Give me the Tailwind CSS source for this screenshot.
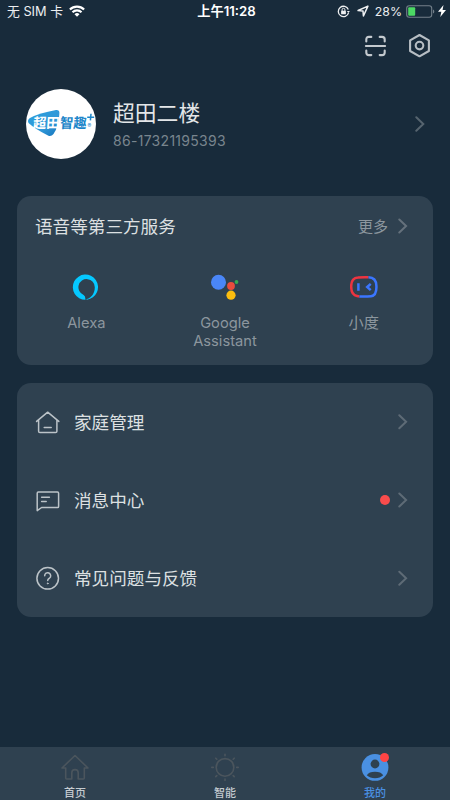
<!DOCTYPE html>
<html lang="zh-CN">
<head>
<meta charset="utf-8">
<title>我的</title>
<script src="https://cdn.jsdelivr.net/npm/@tailwindcss/browser@4"></script>
</head>
<body class="bg-[#182b3b]">
<div class="flex h-[800px] w-[450px] flex-col overflow-hidden bg-[#182b3b] font-['Inter','Noto_Sans_CJK_SC',sans-serif] text-[#dde0e2]">
  <header class="grid h-[23px] shrink-0 grid-cols-[1fr_auto_1fr] items-center pr-1 pl-[7px] text-[12.5px] leading-none text-[#eceef0]">
    <div class="flex items-center gap-[6px]">
      <span class="pt-px text-[12.8px] whitespace-nowrap">无 SIM 卡</span>
      <svg class="h-3 w-4" viewBox="0 0 16 12" fill="none" stroke="#fff" stroke-width="2.2"><path d="M.9 4.5a10.2 10.2 0 0 1 14.2 0M3.5 7.3a6.4 6.4 0 0 1 9 0"/><path d="M5.5 9.3a3.6 3.6 0 0 1 5 0L8 11.7Z" fill="#fff" stroke="none"/></svg>
    </div>
    <span class="pt-px text-[13.2px] font-semibold text-white">上午11:28</span>
    <div class="flex items-center justify-end">
      <svg class="mr-[7px] h-[13px] w-[13px]" viewBox="0 0 13 13" fill="none" stroke="#eef0f2" stroke-width="1.3"><path d="M11.3 4.5a5.2 5.2 0 1 0 .2 3.3"/><path d="M9.8 5.9h3.1l-1.5 2.2Z" fill="#eef0f2" stroke="none"/><rect x="4.1" y="5.7" width="4.8" height="3.6" rx=".5" fill="#eef0f2" stroke="none"/><path d="M5.1 6V4.7a1.4 1.4 0 0 1 2.8 0V6" stroke-width="1"/></svg>
      <svg class="mr-[6px] h-[12px] w-[12px]" viewBox="0 0 11 11" fill="none" stroke="#eef0f2" stroke-width="1.4" stroke-linejoin="round"><path d="M10 1 1 5.1l4.5.4.4 4.6Z"/></svg>
      <span class="mr-[4px] pt-px text-[12.3px]">28%</span>
      <svg class="mr-[3px] h-[13px] w-[29px]" viewBox="0 0 29 13"><rect x=".7" y=".7" width="25" height="11.6" rx="2.5" fill="none" stroke="#74808a" stroke-width="1.1"/><rect x="2.2" y="2.2" width="7" height="8.6" rx="1" fill="#4cd964"/><path d="M27 4.5c1.8.6 1.8 3.4 0 4Z" fill="#74808a"/></svg>
      <svg class="h-3 w-[8px]" viewBox="0 0 7 12" preserveAspectRatio="none" fill="#fff"><path d="M4.8 0 0 6.8h2.9L2 12l5-7H4Z"/></svg>
    </div>
  </header>

  <div class="flex h-[46px] shrink-0 items-center justify-end gap-[20px] pr-[18px]">
    <svg class="h-[23px] w-[23px]" viewBox="0 0 23 23" fill="none" stroke="#c4cacf" stroke-width="2.1" stroke-linecap="round"><path d="M2.3 6.5V4.5Q2.3 1.9 4.9 1.9H7.3M15.7 1.9h2.4q2.6 0 2.6 2.6V6.5M20.7 15.5v2q0 2.6-2.6 2.6h-2.4M7.3 20.1H4.9Q2.3 20.1 2.3 17.5V15.5M1.9 11h19.2"/></svg>
    <svg class="h-6 w-[25px]" viewBox="0 0 25 24" fill="none" stroke="#b7bec4" stroke-width="2.1" stroke-linejoin="round"><path d="M12.5 1 21.9 6.3v10.7l-9.4 5.3-9.4-5.3V6.3Z"/><circle cx="12.5" cy="11.6" r="3.8"/></svg>
  </div>

  <section class="flex h-[110px] shrink-0 items-center pr-[24px] pl-[26px]">
    <div class="h-[70px] w-[70px] shrink-0 overflow-hidden rounded-full bg-white">
      <svg class="h-full w-full" viewBox="0 0 70 70">
        <defs><linearGradient id="brand" x1="0" y1="0" x2="1" y2="1"><stop offset="0" stop-color="#2a9fdc"/><stop offset=".6" stop-color="#3198d8"/><stop offset="1" stop-color="#1373bb"/></linearGradient></defs>
        <path d="M4 29Q13 24 30 21Q33.5 20.6 33.4 24Q33 37 27.5 45Q25 48 22 46.5Q9 40 2.5 34Q1 31 4 29Z" fill="url(#brand)"/>
        <g transform="translate(6.8 38.6) skewX(-4)" font-family="Noto Sans CJK SC, sans-serif" font-size="14" font-weight="700"><text fill="#fff" textLength="26.5" lengthAdjust="spacingAndGlyphs">超田</text><text x="27" fill="#1c86c9" textLength="26.5" lengthAdjust="spacingAndGlyphs">智趣</text></g>
        <path d="M61.2 28.2h7M65 24.8l-.6 6.6" stroke="#1c86c9" stroke-width="1.5"/>
        <text x="61.6" y="38.7" font-size="5.5" fill="#1c86c9" font-family="Inter, sans-serif">®</text>
      </svg>
    </div>
    <div class="ml-[17px] flex-1">
      <div class="pt-px text-[21.8px] leading-[30px] text-[#e3e6e8]">超田二楼</div>
      <div class="mt-[3px] text-[14px] leading-[20px] tracking-[0.29px] text-[#79858e]">86-17321195393</div>
    </div>
    <svg class="h-[17px] w-[12px]" viewBox="0 0 12 17" fill="none" stroke="#56646f" stroke-width="2" stroke-linecap="round"><path d="m2.3 1.3 7 6.7-7 6.7"/></svg>
  </section>

  <section class="mx-[17px] mt-[17px] h-[169px] shrink-0 rounded-[14px] bg-[#2f4150] pt-[15px]">
    <div class="flex h-[30px] items-center justify-between pr-[25px] pl-[18px]">
      <h2 class="pt-[2px] text-[17.6px] leading-none">语音等第三方服务</h2>
      <div class="flex items-center gap-[10px] text-[15px] leading-none text-[#8c969e]">
        <span>更多</span>
        <svg class="h-4 w-[10px]" viewBox="0 0 10 16" fill="none" stroke="#65717c" stroke-width="2" stroke-linecap="round"><path d="m1.3 1.5 6.8 6.5-6.8 6.5"/></svg>
      </div>
    </div>
    <div class="mt-[32px] grid grid-cols-3 text-center text-[14.7px] leading-[18px] text-[#8c969e]">
      <div class="flex flex-col items-center gap-[12.5px]">
        <svg class="h-7 w-7" viewBox="0 0 28 28"><path fill="#05c8ff" d="M13.4 26.8A12.6 12.6 0 1 1 15 26.7Q13.9 26.6 14.9 26.1C19.4 24.6 22.8 20.4 22.8 14.2A8.2 8.2 0 1 0 11.6 21.9Q13.6 22.9 13.4 26.8Z"/></svg>
        <span>Alexa</span>
      </div>
      <div class="flex flex-col items-center gap-[12.5px]">
        <svg class="h-7 w-7" viewBox="0 0 28 28"><circle cx="7.5" cy="9.3" r="7.5" fill="#4a86f7"/><circle cx="20" cy="13" r="3.9" fill="#ea4c3d"/><circle cx="20" cy="22.2" r="4.6" fill="#fcbd0e"/><circle cx="25.5" cy="9" r="1.9" fill="#35a853"/></svg>
        <span>Google<br>Assistant</span>
      </div>
      <div class="flex flex-col items-center gap-[12.5px]">
        <svg class="h-7 w-7" viewBox="0 0 28 28" fill="none" stroke-width="2.5"><path d="M18.5 4.3Q14 3.9 8 4.5Q1.3 5 1.2 13Q1 22 7 23Q8.5 23.3 9.5 23.4" stroke="#ed3440"/><path d="M18.5 4.3Q26.2 4.5 26.4 13Q26.8 22.5 21 23.2Q15 23.9 9.5 23.4" stroke="#3b76ff"/><path d="M8.4 10.3v7.4M20.7 10.8l-3.5 3.2 3.5 3.2" stroke="#3b76ff"/></svg>
        <span class="text-[15.2px]">小度</span>
      </div>
    </div>
  </section>

  <section class="mx-[17px] mt-[18px] grid h-[234px] shrink-0 grid-rows-3 rounded-[14px] bg-[#2f4150] text-[17.6px] leading-none">
    <div class="flex items-center pr-[25px] pl-[18px]">
      <svg class="mr-[14px] h-[25px] w-[25px]" viewBox="0 0 25 25" fill="none" stroke="#bcc3c8" stroke-width="1.5" stroke-linecap="round" stroke-linejoin="round"><path d="M1.6 11.4 12.7 2.2l11.1 9.2M3.6 10v11.3q0 1.3 1.3 1.3h15.7q1.3 0 1.3-1.3V10M9.2 17.6h7"/></svg>
      <span class="flex-1 pt-[1.5px]">家庭管理</span>
      <svg class="h-4 w-[10px]" viewBox="0 0 10 16" fill="none" stroke="#5e6b76" stroke-width="2" stroke-linecap="round"><path d="m1.3 1.3 6.8 6.5-6.8 6.5"/></svg>
    </div>
    <div class="flex items-center pr-[25px] pl-[18px]">
      <svg class="mr-[14px] h-[25px] w-[25px]" viewBox="0 0 25 25" fill="none" stroke="#bcc3c8" stroke-width="1.5" stroke-linecap="round" stroke-linejoin="round"><path d="M2.2 22.6V5.2q0-1.1 1.1-1.1h19.2q1.1 0 1.1 1.1v13.2q0 1.1-1.1 1.1H6.6ZM6.6 9.2h7.8M6.6 13.5h4.6"/></svg>
      <span class="flex-1 pt-[1.5px]">消息中心</span>
      <span class="mr-[8.5px] h-[9.5px] w-[9.5px] rounded-full bg-[#f94c4c]"></span>
      <svg class="h-4 w-[10px]" viewBox="0 0 10 16" fill="none" stroke="#5e6b76" stroke-width="2" stroke-linecap="round"><path d="m1.3 1.5 6.8 6.5-6.8 6.5"/></svg>
    </div>
    <div class="flex items-center pr-[25px] pl-[18px]">
      <svg class="mr-[14px] h-[25px] w-[25px]" viewBox="0 0 25 25" fill="none" stroke="#bcc3c8" stroke-width="1.5" stroke-linecap="round"><circle cx="12.7" cy="12.3" r="10.8"/><path d="M9.7 9.8a3 3 0 1 1 4.9 2.2c-1 .8-1.9 1.2-1.9 2.6"/><circle cx="12.7" cy="17.4" r=".45" fill="#bcc3c8" stroke-width="1"/></svg>
      <span class="flex-1 pt-[1.5px]">常见问题与反馈</span>
      <svg class="h-4 w-[10px]" viewBox="0 0 10 16" fill="none" stroke="#5e6b76" stroke-width="2" stroke-linecap="round"><path d="m1.3 1.7 6.8 6.5-6.8 6.5"/></svg>
    </div>
  </section>

  <nav class="mt-auto grid h-[53px] shrink-0 grid-cols-3 bg-[#2f4150] pt-[6px] text-[11px] leading-[14px] font-medium text-[#c5cbd0]">
    <div class="flex flex-col items-center gap-[5px]">
      <svg class="h-7 w-7" viewBox="0 0 28 28" fill="none" stroke="#4b555d" stroke-width="1.6" stroke-linejoin="round"><path d="M14 2.5 1 15h3.7v10.1q0 .9.9.9h5.2v-6.2a3.2 3.2 0 0 1 6.4 0V26h5.2q.9 0 .9-.9V15H27Z"/></svg>
      <span>首页</span>
    </div>
    <div class="flex flex-col items-center gap-[5px]">
      <svg class="h-7 w-7" viewBox="0 0 28 28" fill="none" stroke="#4b555d" stroke-width="1.6" stroke-linecap="round"><circle cx="14" cy="14.4" r="8.8"/><path d="M14 1.2v1.5M14 26v1.5M.8 14.4h1.5M25.7 14.4h1.5M4.8 5.2l1 1M22.2 22.6l1 1M4.8 23.6l1-1M22.2 6.2l1-1"/></svg>
      <span>智能</span>
    </div>
    <div class="flex flex-col items-center gap-[5px] text-[#4a90e2]">
      <div class="relative h-7 w-7">
        <svg class="h-7 w-7" viewBox="0 0 28 28"><circle cx="14" cy="14.4" r="13.4" fill="#4a90e2"/><circle cx="14" cy="11" r="4.4" fill="#2f4150"/><path d="M5.8 22.2Q8 18.8 14 18.8t8.2 3.4Q19 25.2 14 25.2t-8.2-3Z" fill="#2f4150"/></svg>
        <span class="absolute top-0 left-[19px] h-[9px] w-[9px] rounded-full bg-[#ff4444]"></span>
      </div>
      <span>我的</span>
    </div>
  </nav>
</div>
</body>
</html>
